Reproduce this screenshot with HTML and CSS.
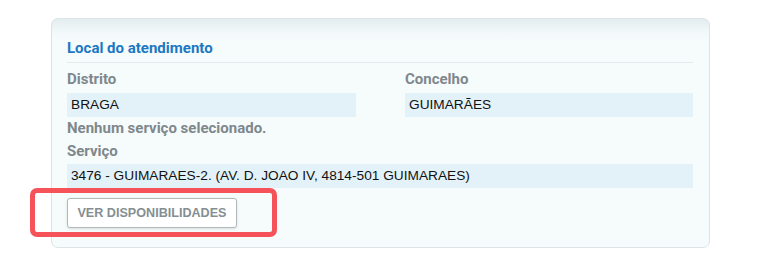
FILE: index.html
```html
<!DOCTYPE html>
<html lang="pt">
<head>
<meta charset="utf-8">
<link rel="stylesheet" href="styles.css">
</head>
<body>
<div class="card">
  <div class="title">Local do atendimento</div>
  <div class="row">
    <div class="field">
      <div class="label">Distrito</div>
      <div class="value short">BRAGA</div>
    </div>
    <div class="field">
      <div class="label">Concelho</div>
      <div class="value">GUIMARÃES</div>
    </div>
  </div>
  <div class="label note">Nenhum serviço selecionado.</div>
  <div class="label svc">Serviço</div>
  <div class="value">3476 - GUIMARAES-2. (AV. D. JOAO IV, 4814-501 GUIMARAES)</div>
  <div class="actions">
    <button class="btn">VER DISPONIBILIDADES</button>
    <div class="highlight"></div>
  </div>
</div>
</body>
</html>
```
FILE: styles.css
```css
html, body { margin: 0; padding: 0; background: #ffffff; }
body { font-family: Roboto, "Liberation Sans", Arial, sans-serif; }
.card {
  margin: 18px 0 0 51px;
  width: 659px;
  height: 230px;
  box-sizing: border-box;
  border: 1px solid #dbe4e7;
  border-radius: 7px;
  padding: 18px 16px 0 15px;
  background: linear-gradient(to bottom, #e3ecef 0px, #f3f9fa 14px, #f6fbfc 24px, #f6fbfc 100%);
}
.title {
  font-size: 15px;
  font-weight: 700;
  color: #1b78c3;
  line-height: 20px;
  padding: 1px 0 4px;
  border-bottom: 1px solid #e6ebee;
}
.row {
  display: grid;
  grid-template-columns: 338px 1fr;
}
.label {
  font-size: 15px;
  font-weight: 700;
  color: #7e888c;
  line-height: 20px;
  margin: 6px 0 4px;
}
.value {
  background: #e3f2f8;
  height: 24px;
  line-height: 24px;
  padding-left: 4px;
  font-family: "Liberation Sans", Arial, sans-serif;
  font-size: 13.7px;
  color: #111;
}
.value.short { width: 285px; }
.note { margin: 1px 0 0; }
.svc { margin: 3px 0 3px; }
.actions {
  position: relative;
  margin-top: 10px;
}
.btn {
  display: block;
  width: 170px;
  height: 30px;
  box-sizing: border-box;
  background: #ffffff;
  border: 1px solid #b3b8ba;
  border-radius: 3px;
  box-shadow: 0 1px 3px rgba(0,0,0,0.12);
  font-family: "Liberation Sans", Arial, sans-serif;
  font-size: 12.6px;
  font-weight: 700;
  color: #858e92;
  padding: 0;
}
.highlight {
  position: absolute;
  left: -37px;
  top: -10px;
  width: 247px;
  height: 49px;
  border: 5px solid #f5525a;
  border-radius: 7px;
  box-sizing: border-box;
}
```
